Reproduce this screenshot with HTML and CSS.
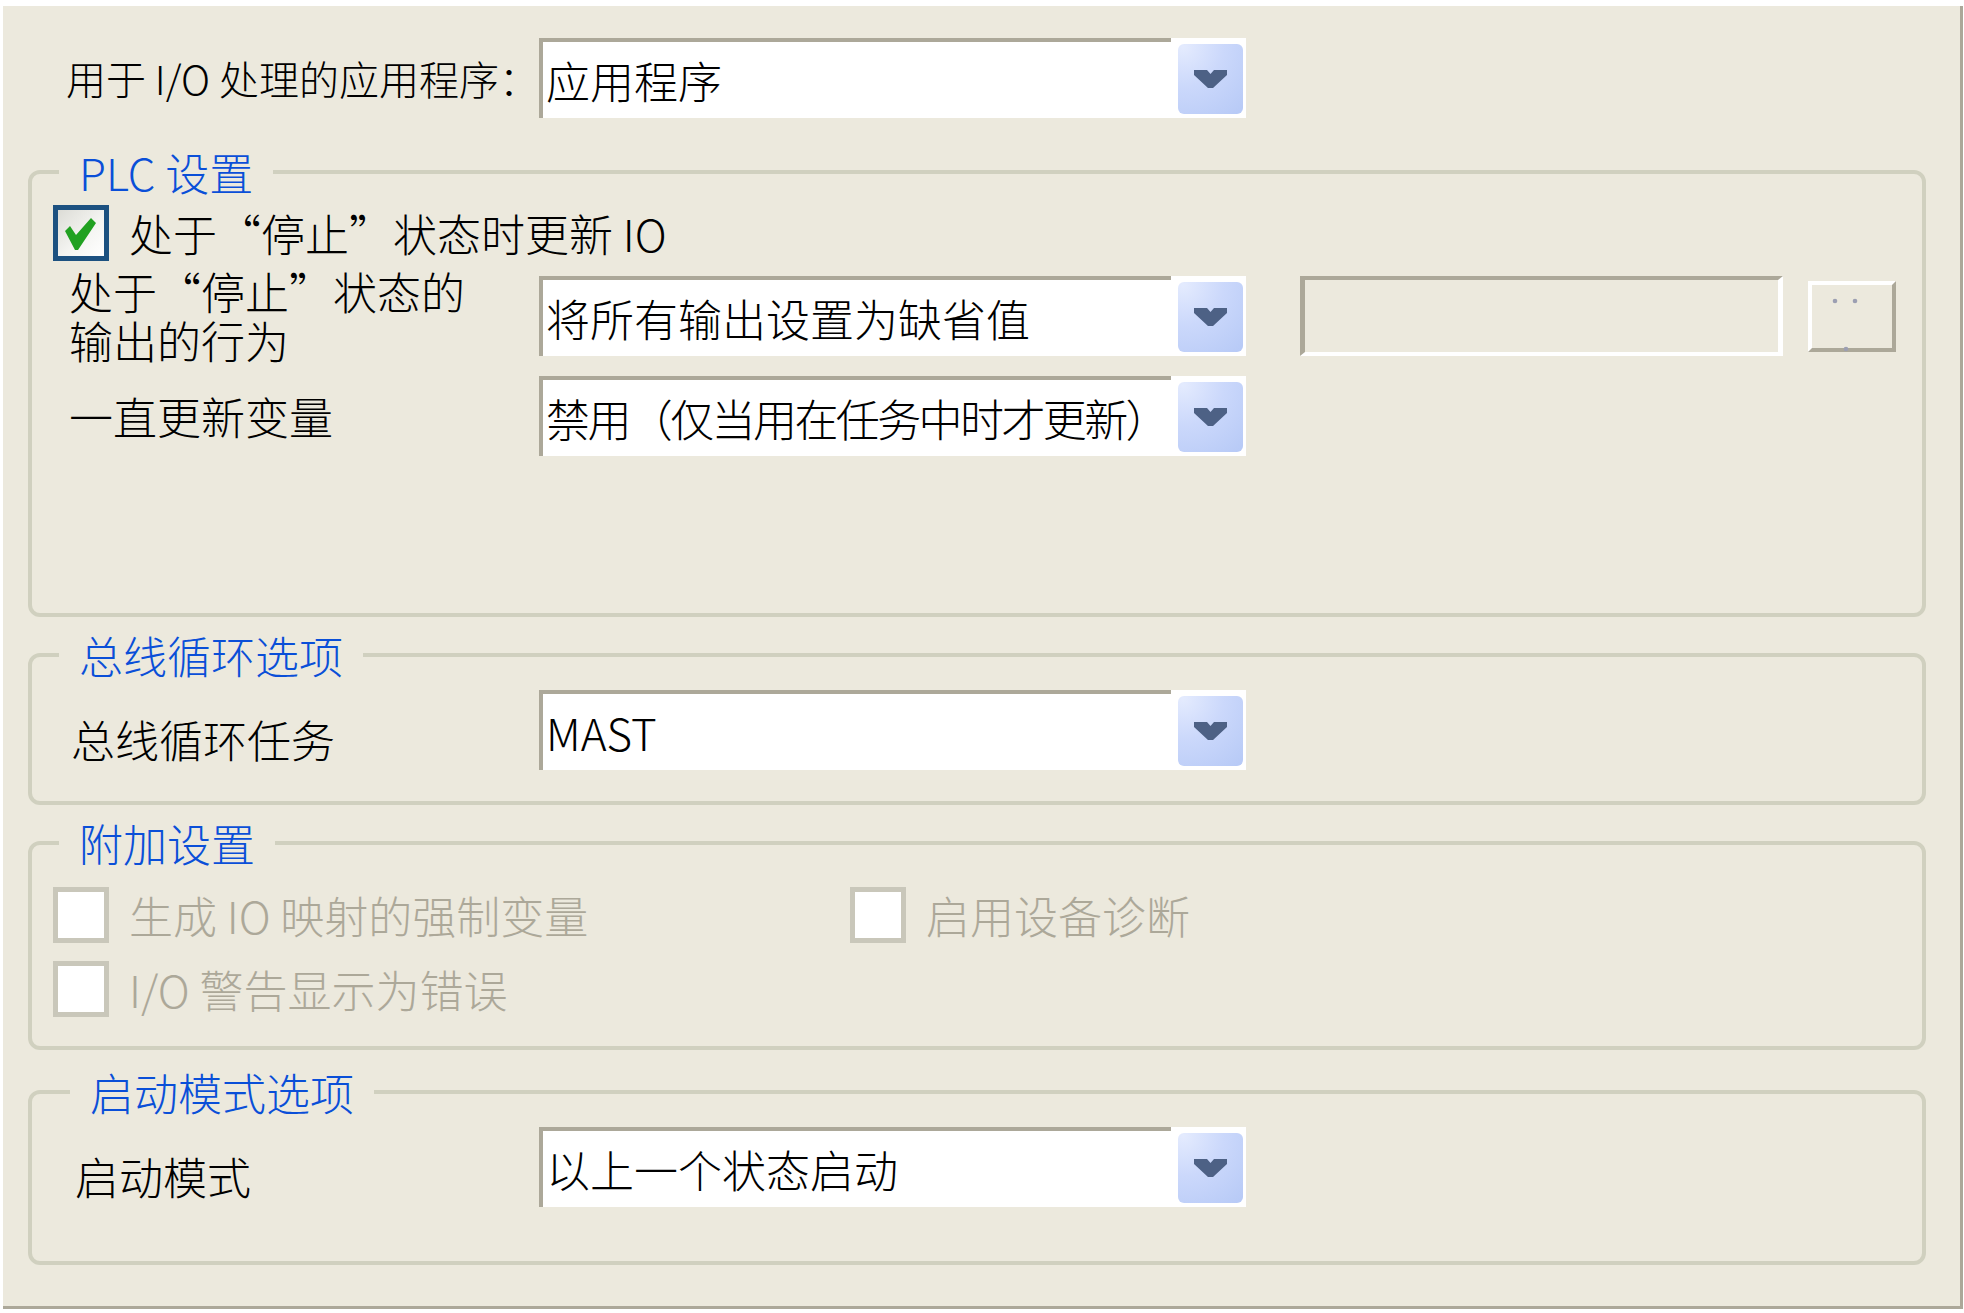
FILE: index.html
```html
<!DOCTYPE html>
<html lang="zh-CN">
<head>
<meta charset="utf-8">
<title>I/O 配置</title>
<link rel="stylesheet" href="styles.css">
</head>
<body>
<div class="panel">
  <div class="row row-app">
    <div class="lbl lbl-app">用于 I/O 处理的应用程序：</div>
    <div class="combo">
      <div class="combo-field">应用程序</div>
      <div class="combo-btn"><div class="combo-face"><svg class="chev" viewBox="0 0 33 18" width="33" height="18"><polygon points="0,0 13,0 16.5,4 20,0 33,0 33,5 19,18 14,18 0,5"/></svg></div></div>
    </div>
  </div>

  <fieldset class="group group-plc">
    <legend class="legend">PLC 设置</legend>
    <div class="check-item check-plc">
      <span class="cb cb-checked"><svg class="tick" viewBox="0 0 46 46" width="46" height="46"><polygon points="7,21 12,16 18,25 33,8 38,13 20,40 17,40"/></svg></span>
      <span class="cb-text">处于“停止”状态时更新 IO</span>
    </div>
    <div class="row row-in row-out">
      <div class="lbl lbl-plc lbl-two">处于“停止”状态的<br>输出的行为</div>
      <div class="combo">
        <div class="combo-field">将所有输出设置为缺省值</div>
        <div class="combo-btn"><div class="combo-face"><svg class="chev" viewBox="0 0 33 18" width="33" height="18"><polygon points="0,0 13,0 16.5,4 20,0 33,0 33,5 19,18 14,18 0,5"/></svg></div></div>
      </div>
      <div class="tfield"></div>
      <div class="dots-btn"><svg class="dots" viewBox="0 0 80 63" width="80" height="63"><circle cx="23" cy="16" r="2.3"/><circle cx="43" cy="16" r="2.3"/><circle cx="34" cy="64" r="2.3"/></svg></div>
    </div>
    <div class="row row-in row-upd">
      <div class="lbl lbl-plc">一直更新变量</div>
      <div class="combo">
        <div class="combo-field combo-tight">禁用（仅当用在任务中时才更新）</div>
        <div class="combo-btn"><div class="combo-face"><svg class="chev" viewBox="0 0 33 18" width="33" height="18"><polygon points="0,0 13,0 16.5,4 20,0 33,0 33,5 19,18 14,18 0,5"/></svg></div></div>
      </div>
    </div>
  </fieldset>

  <fieldset class="group group-bus">
    <legend class="legend">总线循环选项</legend>
    <div class="row row-in row-bus">
      <div class="lbl lbl-bus lbl-low">总线循环任务</div>
      <div class="combo">
        <div class="combo-field">MAST</div>
        <div class="combo-btn"><div class="combo-face"><svg class="chev" viewBox="0 0 33 18" width="33" height="18"><polygon points="0,0 13,0 16.5,4 20,0 33,0 33,5 19,18 14,18 0,5"/></svg></div></div>
      </div>
    </div>
  </fieldset>

  <fieldset class="group group-extra">
    <legend class="legend">附加设置</legend>
    <div class="check-grid">
      <div class="check-item">
        <span class="cb cb-disabled"></span>
        <span class="cb-text cb-text-disabled">生成 IO 映射的强制变量</span>
      </div>
      <div class="check-item">
        <span class="cb cb-disabled"></span>
        <span class="cb-text cb-text-disabled">启用设备诊断</span>
      </div>
      <div class="check-item check-second">
        <span class="cb cb-disabled"></span>
        <span class="cb-text cb-text-disabled">I/O 警告显示为错误</span>
      </div>
    </div>
  </fieldset>

  <fieldset class="group group-start">
    <legend class="legend legend-start">启动模式选项</legend>
    <div class="row row-in row-start">
      <div class="lbl lbl-start lbl-low">启动模式</div>
      <div class="combo">
        <div class="combo-field">以上一个状态启动</div>
        <div class="combo-btn"><div class="combo-face"><svg class="chev" viewBox="0 0 33 18" width="33" height="18"><polygon points="0,0 13,0 16.5,4 20,0 33,0 33,5 19,18 14,18 0,5"/></svg></div></div>
      </div>
    </div>
  </fieldset>
</div>
</body>
</html>
```

FILE: styles.css
```css
* {
  box-sizing: border-box;
}

html, body {
  margin: 0;
  padding: 0;
  background: #ffffff;
}

body {
  font-family: "Noto Sans CJK SC", "Noto Sans", "Liberation Sans", sans-serif;
  font-size: 44px;
  font-weight: 300;
  color: #000;
}

.panel {
  margin: 6px 0 0 3px;
  width: 1960px;
  height: 1303px;
  background: #ece9dd;
  border-right: 3px solid #aca899;
  border-bottom: 3px solid #aca899;
  padding-top: 32px;
  overflow: hidden;
}

/* rows */
.row {
  display: flex;
  align-items: center;
}

.row-app {
  padding-left: 63px;
}

.lbl {
  flex: none;
  font-size: 44px;
  line-height: 49px;
  white-space: nowrap;
}

.lbl-app {
  width: 473px;
  font-size: 40px;
}

.lbl-plc {
  width: 470px;
}

.lbl-two {
  margin: -9px 0;
}

.lbl-bus {
  width: 468px;
}

.lbl-start {
  width: 464px;
}

.lbl-low {
  margin-top: 18px;
}

.row-out {
  padding-left: 37px;
  margin-top: 15px;
}

.row-upd {
  padding-left: 37px;
  margin-top: 20px;
}

.row-bus {
  padding-left: 39px;
  margin-top: 11px;
}

.row-start {
  padding-left: 43px;
  margin-top: 11px;
}

/* combo box */
.combo {
  flex: none;
  display: flex;
  width: 707px;
  height: 80px;
  background: #ffffff;
}

.combo-field {
  flex: 1;
  min-width: 0;
  border-top: 4px solid #aca899;
  border-left: 4px solid #aca899;
  padding-left: 3px;
  display: flex;
  align-items: center;
  font-size: 44px;
  white-space: nowrap;
  overflow: hidden;
}

.combo-tight {
  letter-spacing: -2.6px;
}

.combo-btn {
  flex: none;
  width: 75px;
  height: 80px;
  padding: 6px 3px 4px 7px;
  background: #ffffff;
}

.combo-face {
  width: 100%;
  height: 100%;
  border-radius: 6px;
  background: radial-gradient(circle at 8% 4%, #e4ebfe 0%, #cbd8fb 45%, #b6c9f6 100%);
  display: flex;
  align-items: center;
  justify-content: center;
}

.chev {
  display: block;
  fill: #4d6185;
}

/* disabled text field & ellipsis button */
.tfield {
  flex: none;
  margin-left: 54px;
  width: 483px;
  height: 80px;
  border-top: 4px solid #aca899;
  border-left: 5px solid #aca899;
  border-bottom: 4px solid #ffffff;
  border-right: 5px solid #ffffff;
  background: #ece9dd;
}

.dots-btn {
  flex: none;
  margin-left: 25px;
  width: 88px;
  height: 71px;
  border-top: 4px solid #ffffff;
  border-left: 4px solid #ffffff;
  border-bottom: 4px solid #aca899;
  border-right: 4px solid #aca899;
  background: #ece9dd;
}

.dots {
  display: block;
  overflow: visible;
  fill: #9c9fb2;
}

/* group boxes */
.group {
  margin: 0 0 0 25px;
  width: 1898px;
  border: 4px solid #d0d0bf;
  border-radius: 12px;
  padding: 0;
  min-inline-size: 0;
}

.legend {
  margin-left: 27px;
  padding: 0 20px;
  font-size: 44px;
  line-height: 48px;
  color: #0a4fd8;
}

.legend-start {
  margin-left: 38px;
}

.group-plc {
  margin-top: 30px;
  padding-bottom: 157px;
}

.group-bus {
  margin-top: 14px;
  padding-bottom: 31px;
}

.group-extra {
  margin-top: 14px;
  padding-bottom: 29px;
}

.group-start {
  margin-top: 18px;
  padding-bottom: 54px;
}

/* checkboxes */
.check-item {
  display: flex;
  align-items: center;
  height: 56px;
}

.check-plc {
  margin-top: 9px;
  margin-left: 21px;
}

.cb {
  flex: none;
  width: 56px;
  height: 56px;
  border: 5px solid #c9c7ba;
  background: #ffffff;
  margin-right: 20px;
}

.cb-checked {
  border-color: #1c5180;
  background: linear-gradient(135deg, #dcdcd6 0%, #f4f4f1 55%, #ffffff 100%);
}

.tick {
  display: block;
  fill: #21a121;
}

.cb-text {
  font-size: 44px;
  line-height: 49px;
  white-space: nowrap;
}

.cb-text-disabled {
  color: #aca899;
}

.check-grid {
  display: grid;
  grid-template-columns: 797px auto;
  row-gap: 18px;
  margin-top: 20px;
  margin-left: 21px;
}

.check-second {
  grid-column: 1;
}
```
